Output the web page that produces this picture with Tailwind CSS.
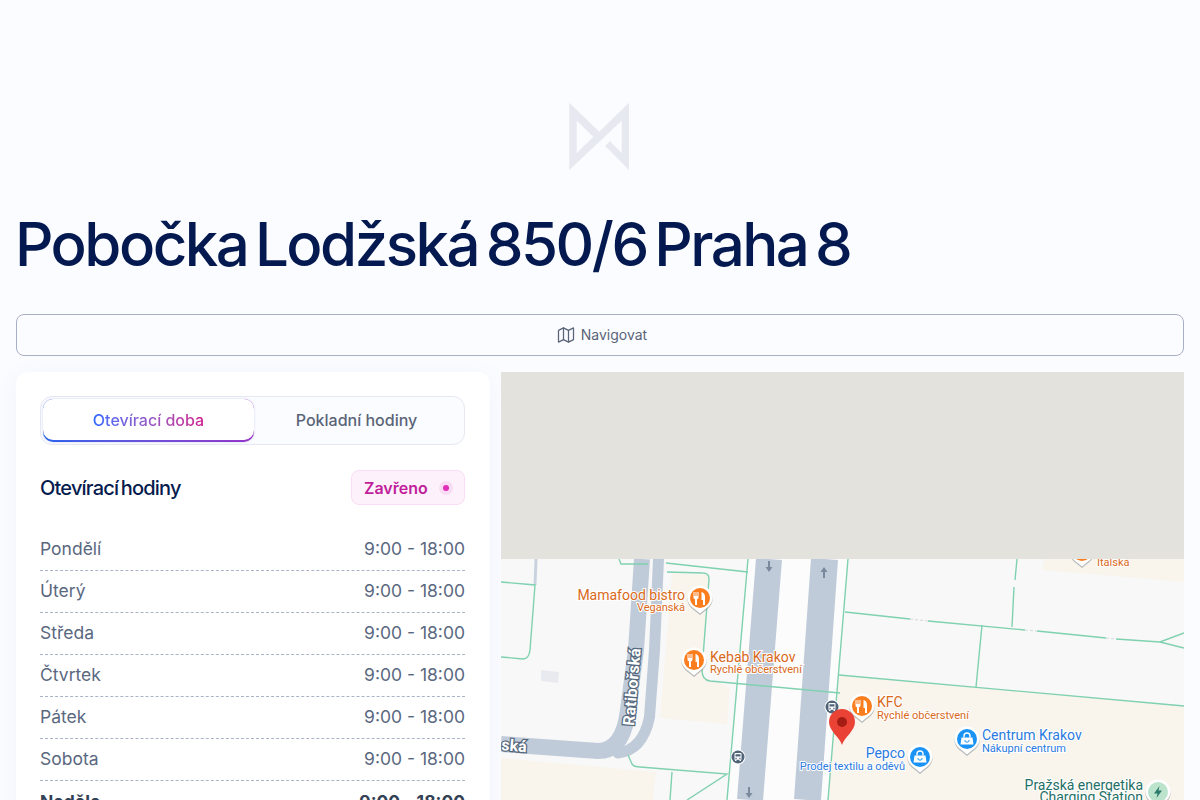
<!DOCTYPE html>
<html lang="cs">
<head>
    <meta charset="UTF-8">
    <meta name="viewport" content="width=device-width, initial-scale=1.0">
    <title>Pobočka Lodžská 850/6 Praha 8</title>
    <script src="https://cdn.jsdelivr.net/npm/@tailwindcss/browser@4"></script>
</head>
<body class="h-screen overflow-hidden bg-[#fbfcff] font-['Inter',sans-serif]">
    <div class="px-4 pt-[102px]">
        <!-- logo -->
        <div class="flex justify-center">
            <svg class="w-[61px] h-[69px] overflow-visible" viewBox="570 102 61 69">
                <path fill="#e6e9ef" fill-rule="evenodd" d="M569.300 102.700L599.300 131.700L629 102.700V170L605 146L610 141L621.700 153.300V120.700L569.300 170ZM576.700 120.700V153.300L593.300 136.700Z"/>
            </svg>
        </div>

        <h1 class="mt-[31px] -ml-px h-[84px] leading-[84px] text-[60px] font-medium tracking-[-2.5px] [word-spacing:-6px] text-[#03194f] whitespace-nowrap">Pobočka Lodžská 850/6 Praha 8</h1>

        <button class="mt-[28px] w-full h-[42px] flex items-center justify-center gap-[5px] pl-[3px] pb-px border border-[#a9b0c6] rounded-lg text-sm text-[#5a6478]">
            <svg class="w-5 h-5" viewBox="0 0 24 24" fill="none" stroke="currentColor" stroke-width="1.500" stroke-linecap="round" stroke-linejoin="round">
                <path d="M3 6.500l6-3 6 3 6-3v14l-6 3-6-3-6 3z"/>
                <path d="M9 3.500v14M15 6.500v14"/>
            </svg>
            Navigovat
        </button>

        <div class="mt-4 flex gap-[11px] items-start">
            <!-- hours card -->
            <div class="w-[474px] h-[600px] shrink-0 bg-white rounded-xl shadow-[0_4px_24px_rgba(90,110,200,0.06)] pt-6 pl-6 pr-[25px]">
                <div class="flex h-[49px] p-0.5 border border-[#e6e8f1] rounded-xl bg-[#fbfcff]">
                    <div class="w-[211px] rounded-[10px] bg-linear-to-r from-[#2563eb] to-[#9333c9] pb-0.5 shadow-[0_0_2px_rgba(90,100,200,0.35)]">
                        <div class="h-full flex items-center justify-center rounded-[10px] bg-white">
                            <span class="font-medium text-base bg-linear-to-r from-[#2f6bff] to-[#d0188f] bg-clip-text text-transparent">Otevírací doba</span>
                        </div>
                    </div>
                    <div class="flex-1 flex items-center justify-center pr-[3px] pb-0.5 font-medium text-base text-[#5a6478]">Pokladní hodiny</div>
                </div>

                <div class="mt-[25px] flex items-center justify-between">
                    <h2 class="text-[20px] font-medium tracking-[-0.8px] [word-spacing:-2px] text-[#051b4e]">Otevírací hodiny</h2>
                    <div class="w-[114px] h-[35px] flex items-center gap-[11px] pl-3 border border-[#fbdcf5] rounded-lg bg-[#fdf2fc]">
                        <span class="text-base font-semibold text-[#c01f9b]">Zavřeno</span>
                        <span class="w-[14px] h-[14px] flex items-center justify-center rounded-full bg-[#fbdcf5]">
                            <span class="w-1.5 h-1.5 rounded-full bg-[#e02fb8]"></span>
                        </span>
                    </div>
                </div>

                <div class="mt-[24px] text-[17.5px] text-[#5a6880]">
                    <div class="h-[42px] flex items-center justify-between border-b border-dashed border-[#aab3c8]"><span>Pondělí</span><span>9:00 - 18:00</span></div>
                    <div class="h-[42px] flex items-center justify-between border-b border-dashed border-[#aab3c8]"><span>Úterý</span><span>9:00 - 18:00</span></div>
                    <div class="h-[42px] flex items-center justify-between border-b border-dashed border-[#aab3c8]"><span>Středa</span><span>9:00 - 18:00</span></div>
                    <div class="h-[42px] flex items-center justify-between border-b border-dashed border-[#aab3c8]"><span>Čtvrtek</span><span>9:00 - 18:00</span></div>
                    <div class="h-[42px] flex items-center justify-between border-b border-dashed border-[#aab3c8]"><span>Pátek</span><span>9:00 - 18:00</span></div>
                    <div class="h-[42px] flex items-center justify-between border-b border-dashed border-[#aab3c8]"><span>Sobota</span><span>9:00 - 18:00</span></div>
                    <div class="h-[42px] flex items-center justify-between font-bold text-[#334155]"><span>Neděle</span><span>9:00 - 18:00</span></div>
                </div>
            </div>

            <!-- map -->
            <div class="flex-1 h-[428px] overflow-hidden bg-[#f8f8f8]">
                <svg class="w-[683px] h-[428px] font-['Roboto',sans-serif]" viewBox="501 372 683 428">
                    <defs>
                        <g id="pin">
                            <path fill="#8a8f96" opacity="0.6" transform="translate(0 1.500)" d="M-12.500 0A12.500 12.500 0 1 1 12.500 0C12.500 6 7 10 3 13L0 15.500L-3 13C-7 10-12.500 6-12.500 0Z"/>
                            <path fill="#fff" d="M-12.500 0A12.500 12.500 0 1 1 12.500 0C12.500 6 7 10 3 13L0 15.500L-3 13C-7 10-12.500 6-12.500 0Z"/>
                        </g>
                        <g id="fork" fill="#fff">
                            <path d="M-6 -6h1v4h1v-4h1v4h1v-4h1v5.500c0 1-.7 1.600-1.500 1.800V7h-2V1.300C-5.300 1.100-6 .5-6-.5Z"/>
                            <path d="M2 -6c2 .3 3.500 2.300 3.500 5V7h-2V2H2Z"/>
                        </g>
                        <g id="bag">
                            <path fill="#fff" d="M-5.500 -1.500h11L6.500 5.500h-13Z"/>
                            <path fill="none" stroke="#fff" stroke-width="1.400" d="M-3 -1.500V-3a3 3 0 0 1 6 0V-1.500"/>
                            <path fill="none" stroke="#1a93f5" stroke-width="1" d="M-2.200 1a2.200 2.200 0 0 0 4.400 0"/>
                        </g>
                        <g id="bus">
                            <circle r="7.500" fill="#fff"/>
                            <circle r="6.500" fill="#506479"/>
                            <path fill="#fff" fill-rule="evenodd" d="M-3.500 -3.200Q-3.500 -4 -2.500 -4H2.500Q3.500 -4 3.500 -3.200V2.800H-3.500ZM-2.500 -2.800V-.4H2.500V-2.800ZM-2.600 .8V1.900H-1.300V.8ZM1.300 .8V1.900H2.600V.8ZM-3 3H-1.500V4H-3ZM1.500 3H3V4H1.500Z"/>
                        </g>
                    </defs>

                    <!-- building areas -->
                    <path fill="#f9f5ed" d="M672 573L708 575L702 677L730 687L727 724L660 718Z"/>
                    <path fill="#f9f5ed" d="M501 758L656 772L653 800H501Z"/>
                    <path fill="#f9f5ed" d="M839 675L1184 706V800H825Z"/>
                    <path fill="#f9f5ed" d="M1042 570L1184 582V559H1045Z"/>
                    <path fill="#e8eaef" d="M541 670L559 672L558 683L541 681Z"/>
                    <path fill="#fcfcfc" d="M748 559H848L828 800H727Z"/>

                    <!-- roads -->
                    <g fill="none" stroke="#c0cbd9">
                        <path stroke-width="26" d="M769 559L750 800"/>
                        <path stroke-width="27" d="M824.500 559L807.500 800"/>
                        <path stroke-width="16" d="M642 559L636 650L627 717Q621 751 598 751L501 744"/>
                        <path stroke-width="11" stroke-linecap="round" d="M658.500 559L654.500 650L649.500 717Q643 750 618 753"/>
                        <path stroke="#c9d3e0" stroke-width="3" d="M536 559L535 585"/>
                    </g>
                    <g fill="#7a8a9c">
                        <path d="M768 561h2v6h2.500l-3.500 5-3.500-5h2.500Z"/>
                        <path d="M823 578h2v-6h2.500l-3.500-5-3.500 5h2.500Z"/>
                        <path d="M748 787h2v6h2.500l-3.500 5-3.500-5h2.500Z"/>
                    </g>

                    <!-- paths -->
                    <g fill="none" stroke="#7fd1b0" stroke-width="1.400">
                        <path d="M619 559L621 564L648 564M666 563L748 572"/>
                        <path d="M748 559L727 800"/>
                        <path d="M667 572L703 573Q709 573 709 579L702 670Q702 680 710 681L840 693"/>
                        <path d="M501 582L535 585L530 650Q529 659 523 659L501 657"/>
                        <path d="M628 755L632 764Q634 767 640 767L727 774L687 800"/>
                        <path d="M672 772L670 800"/>
                        <path d="M848 559L828 800"/>
                        <path d="M845 612L910 619M928 621L1025 630M1037 631L1106 638M1116 639L1160 642L1184 633M1160 642L1184 648"/>
                        <path d="M1017 559L1015 580M1014 587L1012 627"/>
                        <path d="M982 625L976 687"/>
                        <path d="M839 675L1184 706"/>
                    </g>
                    <g fill="none" stroke="#d7dce0" stroke-width="1.200" stroke-dasharray="3 2">
                        <path d="M910 619L928 621M1025 630L1037 631M1106 638L1116 639"/>
                    </g>

                    <!-- street names -->
                    <g fill="#fff" stroke="#55677c" stroke-width="2.500" class="[paint-order:stroke] text-[16px] font-bold">
                        <text transform="translate(634 726) rotate(-85)">Ratibořská</text>
                        <text transform="translate(501 750) rotate(5)">ská</text>
                    </g>

                    <!-- restaurants -->
                    <use href="#pin" x="700" y="598"/><circle cx="700" cy="598" r="10" fill="#fa7d1e"/><use href="#fork" x="699.500" y="598"/>
                    <use href="#pin" x="694" y="660"/><circle cx="694" cy="660" r="10" fill="#fa7d1e"/><use href="#fork" x="693.500" y="660"/>
                    <use href="#pin" x="862" y="706"/><circle cx="862" cy="706" r="10" fill="#fa7d1e"/><use href="#fork" x="861.500" y="706"/>
                    <use href="#pin" x="1082" y="551"/><circle cx="1082" cy="551" r="10" fill="#fa7d1e"/>
                    <g fill="#d9691a" stroke="#fff" stroke-width="2" class="[paint-order:stroke]">
                        <text x="685" y="600" text-anchor="end" class="text-[14px]">Mamafood bistro</text>
                        <text x="685" y="611" text-anchor="end" class="text-[11px]">Veganská</text>
                        <text x="710" y="662" class="text-[14px]">Kebab Krakov</text>
                        <text x="710" y="673" class="text-[11px]">Rychlé občerstvení</text>
                        <text x="877" y="707" class="text-[14px]">KFC</text>
                        <text x="877" y="719" class="text-[11px]">Rychlé občerstvení</text>
                        <text x="1097" y="566" class="text-[11px]">Italská</text>
                    </g>

                    <!-- shops -->
                    <use href="#pin" x="967" y="739"/><circle cx="967" cy="739" r="10" fill="#1a93f5"/><use href="#bag" x="967" y="739"/>
                    <use href="#pin" x="920" y="757"/><circle cx="920" cy="757" r="10" fill="#1a93f5"/><use href="#bag" x="920" y="757"/>
                    <g fill="#2a7be0" stroke="#fff" stroke-width="2" class="[paint-order:stroke]">
                        <text x="982" y="740" class="text-[14px]">Centrum Krakov</text>
                        <text x="982" y="752" class="text-[11px]">Nákupní centrum</text>
                        <text x="905" y="758" text-anchor="end" class="text-[14px]">Pepco</text>
                        <text x="905" y="770" text-anchor="end" class="text-[11px]">Prodej textilu a oděvů</text>
                    </g>

                    <!-- charging station -->
                    <use href="#pin" x="1158" y="792"/><circle cx="1158" cy="792" r="10" fill="#bce3cb"/>
                    <path fill="#2b7a6b" d="M1159.500 786L1154 793.500H1157.500L1156.500 798L1162 790.500H1158.500Z"/>
                    <g fill="#1f6f66" stroke="#fff" stroke-width="2" class="[paint-order:stroke] text-[14px]">
                        <text x="1143" y="790" text-anchor="end">Pražská energetika</text>
                        <text x="1143" y="802" text-anchor="end">Charging Station</text>
                    </g>

                    <use href="#bus" x="832" y="707"/>
                    <use href="#bus" x="738" y="757"/>

                    <!-- red pin -->
                    <path fill="#ea4335" d="M842 745C839.500 737 829 731 829 722A13 13 0 0 1 855 722C855 731 844.500 737 842 745Z"/>
                    <circle cx="842" cy="722" r="5" fill="#a51c14"/>

                    <!-- not loaded part of the map -->
                    <rect x="501" y="372" width="683" height="187" fill="#e3e2dd"/>
                </svg>
            </div>
        </div>
    </div>
</body>
</html>
